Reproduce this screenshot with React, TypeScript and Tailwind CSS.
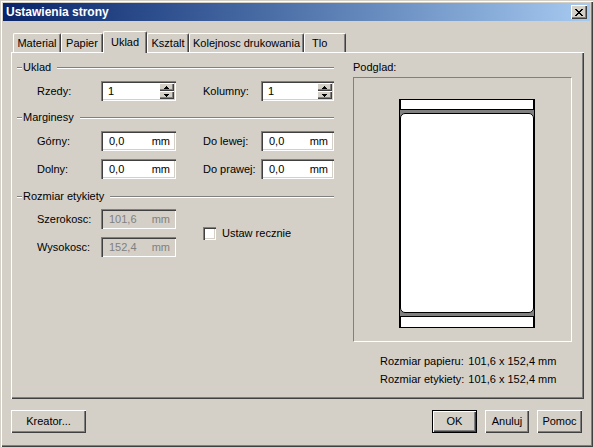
import React from "react";

const raised =
  "shadow-[inset_1px_1px_0_#ffffff,inset_-1px_-1px_0_#404040,inset_-2px_-2px_0_#808080]";
const sunken =
  "shadow-[inset_1px_1px_0_#808080,inset_2px_2px_0_#404040,inset_-1px_-1px_0_#ffffff,inset_-2px_-2px_0_#d4d0c8]";

function CloseGlyph() {
  const rows: [number, number][][] = [
    [[0, 2], [6, 2]],
    [[1, 2], [5, 2]],
    [[2, 4]],
    [[3, 2]],
    [[2, 4]],
    [[1, 2], [5, 2]],
    [[0, 2], [6, 2]],
  ];
  return (
    <svg width="8" height="7" viewBox="0 0 8 7" shapeRendering="crispEdges">
      {rows.map((r, y) =>
        r.map(([x, w], i) => <rect key={`${y}-${i}`} x={x} y={y} width={w} height={1} fill="#000" />)
      )}
    </svg>
  );
}

function Arrow({ up }: { up?: boolean }) {
  return (
    <svg width="5" height="3" viewBox="0 0 5 3" shapeRendering="crispEdges">
      {up ? (
        <>
          <rect x="2" y="0" width="1" height="1" fill="#000" />
          <rect x="1" y="1" width="3" height="1" fill="#000" />
          <rect x="0" y="2" width="5" height="1" fill="#000" />
        </>
      ) : (
        <>
          <rect x="0" y="0" width="5" height="1" fill="#000" />
          <rect x="1" y="1" width="3" height="1" fill="#000" />
          <rect x="2" y="2" width="1" height="1" fill="#000" />
        </>
      )}
    </svg>
  );
}

function Spin({ value, width }: { value: string; width: string }) {
  return (
    <div className={`${width} h-[20px] bg-white flex items-stretch ${sunken}`}>
      <span className="flex-1 self-center pl-[7px]">{value}</span>
      <div className="flex flex-col py-[2px] pr-[2px]">
        <div className={`w-[15px] flex-1 bg-[#d4d0c8] flex items-center justify-center ${raised}`}>
          <Arrow up />
        </div>
        <div className={`w-[15px] flex-1 bg-[#d4d0c8] flex items-center justify-center ${raised}`}>
          <Arrow />
        </div>
      </div>
    </div>
  );
}

function MmField({ value, width, disabled }: { value: string; width: string; disabled?: boolean }) {
  return (
    <div
      className={`${width} h-[20px] flex items-center justify-between pl-[8px] pr-[6px] ${sunken} ${
        disabled ? "bg-[#d4d0c8] text-[#808080]" : "bg-white"
      }`}
    >
      <span>{value}</span>
      <span>mm</span>
    </div>
  );
}

function GroupTitle({ title }: { title: string }) {
  return (
    <div className="flex items-center h-[13px]">
      <div className="w-[5px] h-[2px] border-t border-b border-t-[#808080] border-b-white" />
      <span className="ml-[1px]">{title}</span>
      <div className="flex-1 ml-[6px] h-[2px] border-t border-b border-t-[#808080] border-b-white" />
    </div>
  );
}

function Tab({
  label,
  width,
  active,
  left,
}: {
  label: string;
  width: string;
  active?: boolean;
  left?: boolean;
}) {
  return (
    <div
      className={`${width} flex ${left ? "justify-start pl-[7px]" : "justify-center"} rounded-t-[2px] border-l border-t border-r border-white border-r-[#404040] bg-[#d4d0c8] shadow-[inset_-1px_0_0_#808080] ${
        active ? "h-[22px] pt-[4px] -mb-[1px] relative z-10" : "h-[19px] pt-[3px]"
      }`}
    >
      {label}
    </div>
  );
}

function Button({ label, width, def }: { label: string; width: string; def?: boolean }) {
  return (
    <div
      className={`${width} h-[23px] flex items-center justify-center bg-[#d4d0c8] ${raised} ${
        def ? "border border-black" : ""
      }`}
    >
      {label}
    </div>
  );
}

export default function App() {
  return (
    <div className="w-[593px] h-[447px] bg-[#d4d0c8] p-[3px] flex flex-col font-['Liberation_Sans',Arial,sans-serif] text-[11px] leading-[13px] text-black overflow-hidden shadow-[inset_1px_1px_0_#d4d0c8,inset_2px_2px_0_#ffffff,inset_-1px_-1px_0_#404040,inset_-2px_-2px_0_#808080]">
      {/* Title bar */}
      <div className="h-[18px] flex items-center justify-between pl-[3px] pr-[3px] bg-gradient-to-r from-[#0a246a] to-[#a6caf0]">
        <span className="text-white font-bold text-[12px]">Ustawienia strony</span>
        <div className={`w-[16px] h-[14px] bg-[#d4d0c8] flex items-center justify-center ${raised}`}>
          <CloseGlyph />
        </div>
      </div>

      <div className="flex-1 flex flex-col pl-[8px] pr-[6px]">
        {/* Tabs */}
        <div className="h-[31px] flex items-end pl-[2px]">
          <Tab label="Material" width="w-[48px]" />
          <Tab label="Papier" width="w-[42px]" />
          <Tab label="Uklad" width="w-[44px]" active />
          <Tab label="Ksztalt" width="w-[42px]" />
          <Tab label="Kolejnosc drukowania" width="w-[115px]" />
          <Tab label="Tlo" width="w-[42px]" left />
        </div>

        {/* Panel */}
        <div className="h-[347px] flex pl-[6px] pt-[9px] gap-[19px] shadow-[inset_1px_1px_0_#ffffff,inset_-1px_-1px_0_#404040,inset_-2px_-2px_0_#808080]">
          {/* Left column */}
          <div className="w-[317px] flex flex-col">
            <GroupTitle title="Uklad" />
            <div className="flex items-center mt-[7px] pl-[20px]">
              <span className="w-[64px]">Rzedy:</span>
              <Spin value="1" width="w-[75px]" />
              <span className="w-[58px] ml-[27px]">Kolumny:</span>
              <Spin value="1" width="w-[73px]" />
            </div>

            <div className="mt-[10px]">
              <GroupTitle title="Marginesy" />
            </div>
            <div className="flex items-center mt-[7px] pl-[20px]">
              <span className="w-[64px]">Górny:</span>
              <MmField value="0,0" width="w-[75px]" />
              <span className="w-[58px] ml-[27px]">Do lewej:</span>
              <MmField value="0,0" width="w-[73px]" />
            </div>
            <div className="flex items-center mt-[8px] pl-[20px]">
              <span className="w-[64px]">Dolny:</span>
              <MmField value="0,0" width="w-[75px]" />
              <span className="w-[58px] ml-[27px]">Do prawej:</span>
              <MmField value="0,0" width="w-[73px]" />
            </div>

            <div className="mt-[11px]">
              <GroupTitle title="Rozmiar etykiety" />
            </div>
            <div className="flex items-center mt-[6px] pl-[20px]">
              <div className="flex flex-col gap-[8px]">
                <div className="flex items-center">
                  <span className="w-[64px]">Szerokosc:</span>
                  <MmField value="101,6" width="w-[75px]" disabled />
                </div>
                <div className="flex items-center">
                  <span className="w-[64px]">Wysokosc:</span>
                  <MmField value="152,4" width="w-[75px]" disabled />
                </div>
              </div>
              <div className="flex items-center ml-[27px]">
                <div className={`w-[13px] h-[13px] bg-white ${sunken}`} />
                <span className="ml-[6px]">Ustaw recznie</span>
              </div>
            </div>
          </div>

          {/* Right column: preview */}
          <div className="w-[219px] flex flex-col">
            <div className="h-[13px]">Podglad:</div>
            <div className="mt-[3px] h-[265px] border border-t-[#808080] border-l-[#808080] border-r-white border-b-white pl-[45px] pt-[21px]">
              <div className="w-[136px] h-[229px] bg-white border-x-2 border-y border-black flex flex-col">
                <div className="h-[9px]" />
                <div className="-mx-[1px] bg-[#808080] border-y border-black py-[3px]">
                  <div className="h-[200px] bg-white border border-black rounded-[5px]" />
                </div>
              </div>
            </div>
            <div className="mt-[13px] pl-[27px] grid grid-cols-[max-content_max-content] gap-x-[4px] gap-y-[5px] whitespace-nowrap">
              <span>Rozmiar papieru:</span>
              <span>101,6 x 152,4 mm</span>
              <span>Rozmiar etykiety:</span>
              <span>101,6 x 152,4 mm</span>
            </div>
          </div>
        </div>

        {/* Buttons */}
        <div className="flex mt-[11px] pr-[2px]">
          <Button label="Kreator..." width="w-[75px]" />
          <div className="ml-auto flex gap-[8px]">
            <Button label="OK" width="w-[45px]" def />
            <Button label="Anuluj" width="w-[44px]" />
            <Button label="Pomoc" width="w-[45px]" />
          </div>
        </div>
      </div>
    </div>
  );
}
